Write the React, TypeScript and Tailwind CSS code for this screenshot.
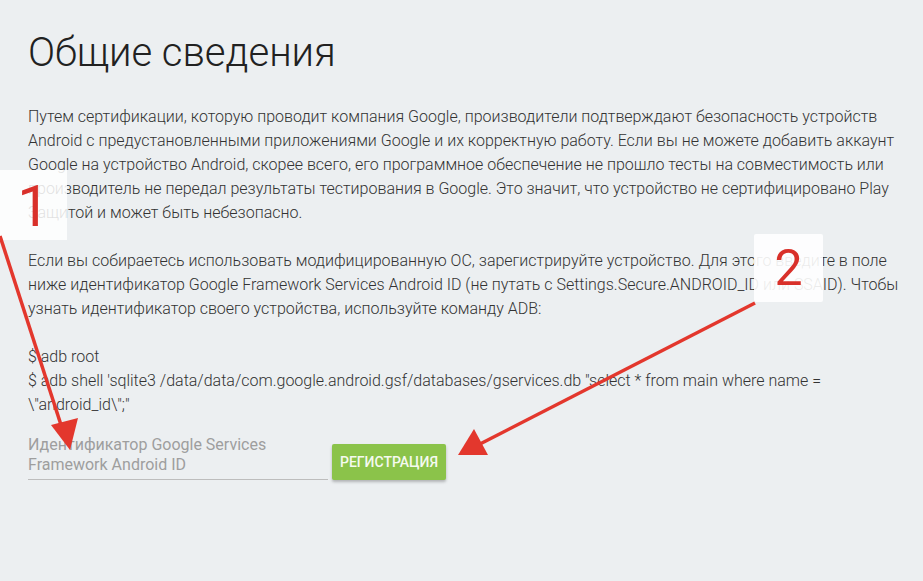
import React from 'react';

const App: React.FC = () => {
  return (
    <div className="relative min-h-screen w-full overflow-hidden bg-[#eceff1] font-['Roboto',sans-serif]">
      <div className="px-[28px] pt-[29px]">
        <h1 className="text-[40px] leading-[48px] font-light text-[#212121]">Общие сведения</h1>

        {/* Description */}
        <div className="mt-[28px] w-[880px] text-[16px] leading-[24px] font-light text-[#333]">
          <p>
            Путем сертификации, которую проводит компания Google, производители подтверждают безопасность устройств
            <br />
            Android с предустановленными приложениями Google и их корректную работу. Если вы не можете добавить аккаунт
            <br />
            Google на устройство Android, скорее всего, его программное обеспечение не прошло тесты на совместимость или
            <br />
            производитель не передал результаты тестирования в Google. Это значит, что устройство не сертифицировано Play
            <br />
            Защитой и может быть небезопасно.
          </p>
          <p className="mt-[24px]">
            Если вы собираетесь использовать модифицированную ОС, зарегистрируйте устройство. Для этого введите в поле
            <br />
            ниже идентификатор Google Framework Services Android ID (не путать с Settings.Secure.ANDROID_ID или SSAID). Чтобы
            <br />
            узнать идентификатор своего устройства, используйте команду ADB:
          </p>
          <p className="mt-[24px]">
            $ adb root
            <br />
            $ adb shell 'sqlite3 /data/data/com.google.android.gsf/databases/gservices.db "select * from main where name =
            <br />
            \"android_id\";"
          </p>
        </div>

        {/* Form */}
        <div className="mt-[18px] flex items-end gap-[4px]">
          <div className="w-[300px] border-b border-[#bdbdbd] pb-[4px] text-[16px] leading-[20px] text-[#9e9e9e]">
            Идентификатор Google Services
            <br />
            Framework Android ID
          </div>
          <button className="h-[36px] w-[114px] rounded-[2px] bg-[#8bc34a] text-[14px] font-medium text-[#f5faf0] shadow-[0_2px_3px_rgba(0,0,0,0.25)]">
            РЕГИСТРАЦИЯ
          </button>
        </div>
      </div>

      {/* Annotation boxes */}
      <div className="absolute left-0 top-[170px] flex h-[70px] w-[67px] items-start justify-center bg-white/85">
        <span className="mt-[4px] text-[58px] leading-[64px] font-normal text-[#d9302a]">1</span>
      </div>
      <div className="absolute left-[754px] top-[234px] flex h-[68px] w-[69px] items-center justify-center rounded-[2px] bg-white/90">
        <span className="text-[50px] leading-[56px] font-normal text-[#d9302a]">2</span>
      </div>

      {/* Arrows */}
      <svg className="pointer-events-none absolute left-0 top-0" width="923" height="581">
        <line x1="0" y1="236" x2="62" y2="428" stroke="#e3372d" strokeWidth="3.5" />
        <polygon points="70,450 51,425 78,418" fill="#e3372d" />
        <line x1="755" y1="303" x2="480" y2="444" stroke="#e3372d" strokeWidth="3.5" />
        <polygon points="458,455 474,429 488,455" fill="#e3372d" />
      </svg>
    </div>
  );
};

export default App;
